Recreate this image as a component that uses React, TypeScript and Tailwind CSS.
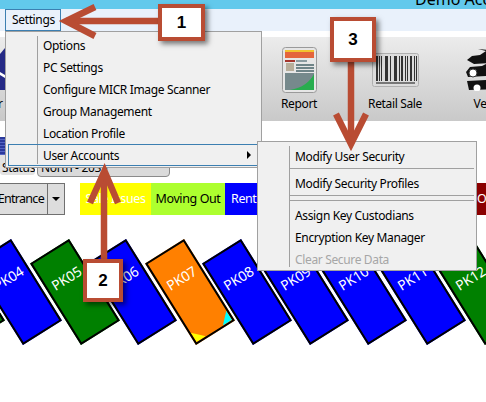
import React from 'react';

const FONT = 'font-["Noto_Sans",sans-serif]';

// parking bays along the bottom, cx is the centre of the rotated box
const BAYS = [
  { name: 'PK03', cx: -40, color: 'bg-[#008000]' },
  { name: 'PK04', cx: 17, color: 'bg-[#0000ff]' },
  { name: 'PK05', cx: 75, color: 'bg-[#008000]' },
  { name: 'PK06', cx: 132, color: 'bg-[#0000ff]' },
  { name: 'PK07', cx: 189.5, color: 'bg-[#ff8000]', flags: true },
  { name: 'PK08', cx: 247, color: 'bg-[#0000ff]' },
  { name: 'PK09', cx: 304, color: 'bg-[#0000ff]' },
  { name: 'PK10', cx: 362, color: 'bg-[#0000ff]' },
  { name: 'PK11', cx: 421, color: 'bg-[#0000ff]' },
  { name: 'PK12', cx: 479, color: 'bg-[#008000]' },
];

const BARS = [0, 3, 5, 9, 11, 14, 18, 20, 23, 25, 29, 31, 34, 38, 40];

function ReportIcon() {
  return (
    <svg width="35" height="46" viewBox="0 0 35 46">
      <rect x="0.5" y="0.5" width="34" height="45" rx="3" fill="#e6e6e6" stroke="#9a9a9a" />
      <rect x="3" y="3" width="29" height="2" fill="#f2c230" />
      <rect x="3" y="5" width="29" height="6" fill="#e4643c" />
      <rect x="3" y="13" width="10" height="2" fill="#a5352c" />
      <rect x="4" y="16" width="8" height="8" fill="#b8ae9a" />
      <rect x="14" y="13" width="11" height="2" fill="#8a9ba0" />
      <rect x="14" y="17" width="18" height="2" fill="#6f8488" />
      <rect x="14" y="20" width="18" height="2" fill="#6f8488" />
      <rect x="14" y="23" width="18" height="2" fill="#6f8488" />
      <rect x="3" y="26" width="29" height="17" fill="#76898c" />
      <path d="M8 43 C20 41 28 35 32 27 L32 43 Z" fill="#27ad4e" />
    </svg>
  );
}

function BarcodeIcon() {
  return (
    <svg width="47" height="34" viewBox="0 0 47 34">
      <rect x="0.5" y="0.5" width="46" height="33" rx="2" fill="#dcdcdc" stroke="#b0b0b0" />
      {BARS.map((x, i) => (
        <rect key={x} x={4 + x} y="3" width={i % 3 === 0 ? 2 : 1} height="25" fill="#333" />
      ))}
      <rect x="4" y="29" width="39" height="2" fill="#777" />
    </svg>
  );
}

function CarsIcon() {
  return (
    <svg width="58" height="42" viewBox="0 0 58 42">
      <path d="M1 11 L6 7 L14 6 L20 2 L12 0 L22 1 L30 4 L40 5 L40 13 L8 15 Z" fill="#111" />
      <path d="M0 23 L4 18 L16 17 L22 14 L40 14 L40 26 L2 28 Z" fill="#111" />
      <circle cx="7" cy="24" r="4" fill="#fff" stroke="#333" />
      <path d="M1 32 L40 30 L40 40 L3 41 Z" fill="#111" />
      <circle cx="11" cy="39" r="3.5" fill="#fff" />
    </svg>
  );
}

function ToolItem({ label, icon, className }: { label: string; icon: React.ReactNode; className: string }) {
  return (
    <div className={`flex flex-col items-center shrink-0 pt-[8px] ${className}`}>
      <div className="h-[50px] flex items-center">{icon}</div>
      <span className="mt-[1px] text-[12px] leading-[16px] tracking-[-0.35px] text-black whitespace-nowrap">{label}</span>
    </div>
  );
}

function MenuRow({ label, active, disabled }: { label: string; active?: boolean; disabled?: boolean }) {
  return (
    <div
      className={`relative mx-[2px] h-[22px] pl-[34px] pt-[2px] flex items-center text-[12px] tracking-[-0.35px] whitespace-nowrap border ${
        active ? 'border-[#3c7fb1]' : 'border-transparent'
      } ${disabled ? 'text-[#a6a6a6]' : 'text-black'}`}
    >
      {label}
      {active && <span className="absolute right-[7px] top-[6px] w-0 h-0 border-y-[4px] border-y-transparent border-l-[4px] border-l-black" />}
    </div>
  );
}

function Bay({ name, cx, color, flags }: { name: string; cx: number; color: string; flags?: boolean }) {
  return (
    <div
      className={`absolute top-[29px] w-[46px] h-[96px] -rotate-[32deg] border-2 border-black overflow-hidden ${color}`}
      style={{ left: cx - 23 }}
    >
      <span className="absolute left-0 right-0 top-[21px] text-center text-[14px] leading-[18px] tracking-[-0.2px] text-white">{name}</span>
      {flags && (
        <>
          <span className="absolute left-0 bottom-0 w-[11px] h-[11px] bg-[#ffff00] [clip-path:polygon(0_0,0_100%,100%_100%)]" />
          <span className="absolute right-0 bottom-0 w-[11px] h-[11px] bg-[#00ffff] [clip-path:polygon(100%_0,0_100%,100%_100%)]" />
        </>
      )}
    </div>
  );
}

export default function App() {
  return (
    <div className={`relative w-[486px] h-[402px] overflow-hidden bg-white flex flex-col ${FONT}`}>
      {/* title bar, the caption is cut off by the crop */}
      <div className="h-[9px] shrink-0 bg-[#62c9ec] overflow-hidden flex items-end pl-[415px]">
        <span className="text-[16px] leading-[16px] mb-[2px] text-black whitespace-nowrap">Demo Account</span>
      </div>

      <div className="h-[22px] shrink-0 bg-[#e9f1fb] pl-[5px]">
        <div className="w-[56px] h-[22px] border border-[#3c7fb1] pl-[6px] flex items-center text-[12px] tracking-[-0.35px] text-black">Settings</div>
      </div>

      <div className="h-[6px] shrink-0" />

      {/* toolbar */}
      <div className="h-[84px] shrink-0 bg-gradient-to-b from-[#ececec] to-[#c9c9c9] flex overflow-hidden">
        <div className="w-[5px] shrink-0 pt-[11px]">
          <svg width="5" height="42" viewBox="0 0 5 42">
            <path d="M0 6 L5 0 L5 42 L0 42 Z" fill="#252a86" />
            <path d="M0 24 L5 27 L5 30 L0 27 Z" fill="#fff" />
          </svg>
          <span className="block mt-[6px] -ml-[2px] text-[12px] leading-[16px] text-black">r</span>
        </div>
        <ToolItem label="Report" icon={<ReportIcon />} className="w-[60px] ml-[264px]" />
        <ToolItem label="Retail Sale" icon={<BarcodeIcon />} className="w-[70px] ml-[31px]" />
        <ToolItem label="Vehicles" icon={<CarsIcon />} className="w-[58px] ml-[36px]" />
      </div>

      <div className="h-[16px] shrink-0" />

      <div className="h-[18px] shrink-0 w-[37px] bg-[repeating-linear-gradient(180deg,#2b3a9c_0,#2b3a9c_2px,#5565c4_2px,#5565c4_3px)]" />

      {/* status tabs */}
      <div className="h-[22px] shrink-0 flex items-start">
        <div className="w-[35px] h-[20px] shrink-0 bg-[#e2e2e2] rounded-b-[3px] text-[12px] tracking-[-0.35px] leading-[26px] pl-[2px] overflow-hidden text-black">Status</div>
        <div className="ml-[2px] w-[133px] h-[22px] shrink-0 bg-[#dadada] border border-[#8a8a8a] rounded-b-[4px] text-[12px] tracking-[-0.35px] leading-[24px] pl-[3px] text-black">North - 2039</div>
      </div>

      <div className="h-[6px] shrink-0" />

      {/* gate selector and legend */}
      <div className="h-[32px] shrink-0 flex text-[12.5px] tracking-[-0.4px]">
        <div className="w-[48px] shrink-0 bg-[#dddddd] border-y border-r border-[#707070] flex items-center justify-end pr-[3px] overflow-hidden tracking-[-0.7px] text-black whitespace-nowrap">
          Entrance
        </div>
        <div className="w-[17px] shrink-0 bg-[#dddddd] border-y border-r border-[#707070] flex items-center justify-center">
          <span className="w-0 h-0 border-x-[4px] border-x-transparent border-t-[4px] border-t-black" />
        </div>
        <div className="ml-[15px] w-[71px] shrink-0 bg-[#ffff00] flex items-center justify-center text-white whitespace-nowrap">Sale Issues</div>
        <div className="w-[74px] shrink-0 bg-[#adff2f] flex items-center justify-center text-black whitespace-nowrap">Moving Out</div>
        <div className="w-[60px] shrink-0 bg-[#0000ff] flex items-center pl-[6px] text-white whitespace-nowrap">Rented</div>
        <div className="ml-[191px] w-[40px] shrink-0 bg-[#8b0000] flex items-center pl-[1px] text-white whitespace-nowrap">Over</div>
      </div>

      {/* parking canvas */}
      <div className="relative flex-1">
        {BAYS.map(b => <Bay key={b.name} {...b} />)}
      </div>

      {/* settings menu */}
      <div className="absolute left-[5px] top-[31px] w-[257px] bg-[#f0f0f0] border border-[#a0a0a0] pt-[2px] pb-[1px]">
        <span className="absolute left-[31px] top-[4px] w-px h-[128px] bg-[#a0a0a0]" />
        <MenuRow label="Options" />
        <MenuRow label="PC Settings" />
        <MenuRow label="Configure MICR Image Scanner" />
        <MenuRow label="Group Management" />
        <MenuRow label="Location Profile" />
        <MenuRow label="User Accounts" active />
      </div>

      {/* user accounts submenu */}
      <div className="absolute left-[257px] top-[141px] w-[220px] bg-[#f0f0f0] border border-[#a0a0a0] pt-[3px]">
        <span className="absolute left-[31px] top-[4px] w-px h-[121px] bg-[#a0a0a0]" />
        <MenuRow label="Modify User Security" />
        <div className="h-px mt-[1px] mb-[3px] ml-[32px] mr-[2px] bg-[#a0a0a0]" />
        <MenuRow label="Modify Security Profiles" />
        <div className="h-px mt-[1px] ml-[32px] mr-[2px] bg-[#a0a0a0]" />
        <div className="h-px mt-[4px] mb-[3px] ml-[32px] mr-[2px] bg-[#a0a0a0]" />
        <MenuRow label="Assign Key Custodians" />
        <MenuRow label="Encryption Key Manager" />
        <MenuRow label="Clear Secure Data" disabled />
      </div>

      {/* annotation arrows */}
      <svg className="absolute left-0 top-0 pointer-events-none" width="486" height="402" viewBox="0 0 486 402">
        <g stroke="#b94c33" strokeWidth="6.5" fill="none">
          <path d="M66 21 H160" />
          <path d="M95 7 L66 21 L95 36" />
          <path d="M351 60 V142" />
          <path d="M336 114 L351 144 L366 114" />
          <path d="M104 172 V262" />
          <path d="M90 203 L104.500 171 L118 203" />
        </g>
      </svg>

      <div className="absolute left-[158px] top-[4px] w-[47px] h-[37px] bg-white border-[4px] border-[#b94c33] shadow-[3px_3px_5px_rgba(0,0,0,0.5)] flex items-center justify-center font-['Liberation_Sans',sans-serif] font-bold text-[17px] text-black">1</div>
      <div className="absolute left-[330px] top-[17px] w-[46px] h-[45px] bg-white border-[4px] border-[#b94c33] shadow-[3px_3px_5px_rgba(0,0,0,0.5)] flex items-center justify-center font-['Liberation_Sans',sans-serif] font-bold text-[17px] text-black">3</div>
      <div className="absolute left-[83px] top-[259px] w-[40px] h-[43px] bg-white border-[4px] border-[#b94c33] shadow-[3px_3px_5px_rgba(0,0,0,0.5)] flex items-center justify-center font-['Liberation_Sans',sans-serif] font-bold text-[17px] text-black">2</div>
    </div>
  );
}
